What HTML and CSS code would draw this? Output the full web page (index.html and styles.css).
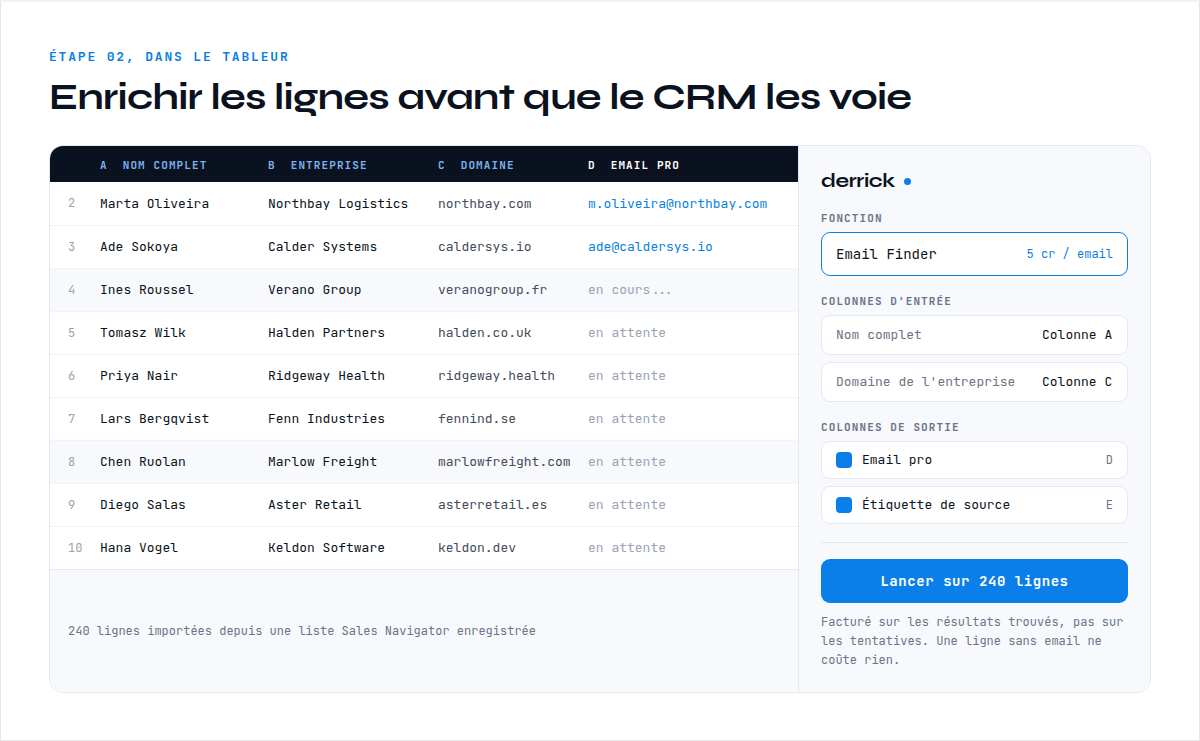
FILE: index.html
```html
<!DOCTYPE html>
<html lang="fr">
<head>
  <meta charset="UTF-8" />
  <meta name="viewport" content="width=device-width, initial-scale=1.0"/>
  <title>Enrichir les lignes avant que le CRM les voie</title>
  <link rel="stylesheet" href="styles.css">
</head>
<body>
  <main class="page">
    <p class="eyebrow">ÉTAPE 02, DANS LE TABLEUR</p>
    <h1>Enrichir les lignes avant que le CRM les voie</h1>

    <div class="card">
      <section class="sheet">
        <table>
          <colgroup>
            <col class="col-num">
            <col class="col-name">
            <col class="col-company">
            <col class="col-domain">
            <col>
          </colgroup>
          <thead>
            <tr>
              <th></th>
              <th><span class="letter">A</span>NOM COMPLET</th>
              <th><span class="letter">B</span>ENTREPRISE</th>
              <th><span class="letter">C</span>DOMAINE</th>
              <th class="active"><span class="letter">D</span>EMAIL PRO</th>
            </tr>
          </thead>
          <tbody>
            <tr><td>2</td><td>Marta Oliveira</td><td>Northbay Logistics</td><td class="domain">northbay.com</td><td><a href="mailto:m.oliveira@northbay.com">m.oliveira@northbay.com</a></td></tr>
            <tr><td>3</td><td>Ade Sokoya</td><td>Calder Systems</td><td class="domain">caldersys.io</td><td><a href="mailto:ade@caldersys.io">ade@caldersys.io</a></td></tr>
            <tr class="tinted"><td>4</td><td>Ines Roussel</td><td>Verano Group</td><td class="domain">veranogroup.fr</td><td class="pending">en cours...</td></tr>
            <tr><td>5</td><td>Tomasz Wilk</td><td>Halden Partners</td><td class="domain">halden.co.uk</td><td class="pending">en attente</td></tr>
            <tr><td>6</td><td>Priya Nair</td><td>Ridgeway Health</td><td class="domain">ridgeway.health</td><td class="pending">en attente</td></tr>
            <tr><td>7</td><td>Lars Bergqvist</td><td>Fenn Industries</td><td class="domain">fennind.se</td><td class="pending">en attente</td></tr>
            <tr class="tinted"><td>8</td><td>Chen Ruolan</td><td>Marlow Freight</td><td class="domain">marlowfreight.com</td><td class="pending">en attente</td></tr>
            <tr><td>9</td><td>Diego Salas</td><td>Aster Retail</td><td class="domain">asterretail.es</td><td class="pending">en attente</td></tr>
            <tr><td>10</td><td>Hana Vogel</td><td>Keldon Software</td><td class="domain">keldon.dev</td><td class="pending">en attente</td></tr>
          </tbody>
        </table>
        <p class="sheet-note">240 lignes importées depuis une liste Sales Navigator enregistrée</p>
      </section>

      <form class="panel">
        <div class="brand">derrick<span class="dot"></span></div>

        <label class="section-label" for="fonction">FONCTION</label>
        <div class="field field-main">
          <select id="fonction"><option>Email Finder</option></select>
          <span class="price">5 cr / email</span>
        </div>

        <h2 class="section-label">COLONNES D'ENTRÉE</h2>
        <div class="stack">
          <div class="field">
            <label for="nom">Nom complet</label>
            <select id="nom"><option>Colonne A</option></select>
          </div>
          <div class="field">
            <label for="domaine">Domaine de l'entreprise</label>
            <select id="domaine"><option>Colonne C</option></select>
          </div>
        </div>

        <h2 class="section-label">COLONNES DE SORTIE</h2>
        <div class="stack">
          <label class="field output">
            <input type="checkbox" checked>Email pro<span class="target">D</span>
          </label>
          <label class="field output">
            <input type="checkbox" checked>Étiquette de source<span class="target">E</span>
          </label>
        </div>

        <hr>
        <button type="button">Lancer sur 240 lignes</button>
        <p class="panel-note">Facturé sur les résultats trouvés, pas sur les tentatives. Une ligne sans email ne coûte rien.</p>
      </form>
    </div>
  </main>
</body>
</html>
```

FILE: styles.css
```css
:root {
  --ink: #0a1220;
  --blue: #0a7fea;
  --link: #0b7fe0;
  --tint: #f7f9fd;
  --line: #e4e8ef;
  --muted: #6b7485;
  --faint: #9aa3b2;
  --mono: "JetBrains Mono", "DejaVu Sans Mono", monospace;
  --display: Syne, Inter, sans-serif;
}

* {
  box-sizing: border-box;
}

body {
  margin: 0;
  background: #fff;
  color: var(--ink);
  font-family: var(--mono);
  font-size: 13px;
}

.page {
  min-height: 100vh;
  padding: 46px 48px 47px;
  border: 1px solid #e6e6e6;
  border-top: 2px solid #f2f2f2;
}

.eyebrow {
  margin: 0;
  line-height: 18px;
  letter-spacing: 0.14em;
  font-weight: 600;
  color: var(--link);
}

h1 {
  margin: 8px 0 25px;
  font-family: var(--display);
  font-size: 38px;
  font-weight: 700;
  line-height: 46px;
  letter-spacing: -0.02em;
}

.card {
  display: grid;
  grid-template-columns: 1fr 352px;
  border: 1px solid var(--line);
  border-radius: 14px;
  overflow: hidden;
}

/* spreadsheet */
.sheet {
  display: flex;
  flex-direction: column;
  background: var(--tint);
}

table {
  width: 100%;
  table-layout: fixed;
  border-collapse: collapse;
  background: #fff;
}

.col-num {
  width: 50px;
}

.col-name {
  width: 168px;
}

.col-company {
  width: 170px;
}

.col-domain {
  width: 150px;
}

th, td {
  padding: 0;
  text-align: left;
  white-space: nowrap;
}

th {
  height: 36px;
  padding-top: 2px;
  background: var(--ink);
  color: #7db2ee;
  font-size: 11px;
  font-weight: 600;
  letter-spacing: 0.1em;
}

th.active {
  color: #fff;
}

.letter {
  margin-right: 15px;
}

td {
  height: 43px;
  border-bottom: 1px solid #f1f3f7;
}

tr:last-child td {
  border-bottom-color: var(--line);
}

td:first-child {
  padding-left: 18px;
  font-size: 12px;
  color: var(--faint);
}

.tinted {
  background: var(--tint);
}

td a {
  color: var(--link);
  text-decoration: none;
}

.domain {
  color: #444b59;
}

.pending {
  color: var(--faint);
}

.sheet-note {
  margin: auto 18px;
  font-size: 12px;
  color: var(--muted);
}

/* side panel */
.panel {
  padding: 23px 22px 22px;
  border-left: 1px solid var(--line);
  background: var(--tint);
}

.brand {
  display: flex;
  align-items: center;
  gap: 9px;
  margin-bottom: 18px;
  font-family: var(--display);
  font-size: 20px;
  font-weight: 700;
  line-height: 24px;
  letter-spacing: -0.02em;
}

.dot {
  width: 7px;
  height: 7px;
  border-radius: 50%;
  background: var(--blue);
}

.section-label {
  display: block;
  margin: 18px 0 7px;
  font-size: 11px;
  font-weight: 600;
  line-height: 14px;
  letter-spacing: 0.1em;
  color: var(--muted);
}

.stack {
  display: grid;
  gap: 7px;
}

.field {
  display: flex;
  align-items: center;
  justify-content: space-between;
  height: 40px;
  padding: 0 14px 2px;
  border: 1px solid var(--line);
  border-radius: 9px;
  background: #fff;
}

.field label {
  color: var(--muted);
}

.field select {
  appearance: none;
  padding: 0;
  border: none;
  background: none;
  color: var(--ink);
  font: inherit;
}

.field-main {
  height: 44px;
  padding-bottom: 0;
  border-color: var(--link);
  font-size: 14px;
}

.price {
  font-size: 12px;
  color: var(--link);
}

.output {
  justify-content: flex-start;
  gap: 10px;
  height: 38px;
  padding-bottom: 1px;
}

.output input {
  appearance: none;
  width: 16px;
  height: 16px;
  margin: 0;
  border-radius: 4px;
  background: #cfd6e2;
}

.output input:checked {
  background: var(--blue);
}

.target {
  margin-left: auto;
  font-size: 12px;
  color: var(--muted);
}

hr {
  margin: 18px 0 16px;
  border: none;
  border-top: 1px solid var(--line);
}

button {
  width: 100%;
  height: 44px;
  border: none;
  border-radius: 9px;
  background: var(--blue);
  color: #fff;
  font-family: inherit;
  font-size: 14px;
  font-weight: 600;
  letter-spacing: 0.04em;
  cursor: pointer;
}

.panel-note {
  margin: 10px 0 0;
  font-size: 12px;
  line-height: 19px;
  color: var(--muted);
}
```
